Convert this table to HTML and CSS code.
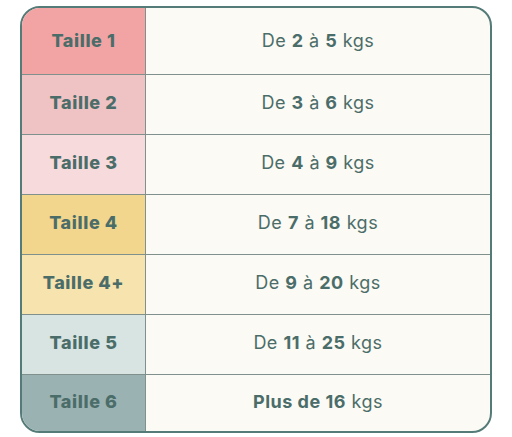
FILE: index.html
```
<!DOCTYPE html>
<html lang="fr">
<head>
<meta charset="utf-8">
<link rel="stylesheet" href="styles.css">
</head>
<body>
<div class="table">
  <div class="row r1"><div class="size">Taille 1</div><div class="weight">De <b>2</b> à <b>5</b> kgs</div></div>
  <div class="row r2"><div class="size">Taille 2</div><div class="weight">De <b>3</b> à <b>6</b> kgs</div></div>
  <div class="row r3"><div class="size">Taille 3</div><div class="weight">De <b>4</b> à <b>9</b> kgs</div></div>
  <div class="row r4"><div class="size">Taille 4</div><div class="weight">De <b>7</b> à <b>18</b> kgs</div></div>
  <div class="row r5"><div class="size">Taille 4+</div><div class="weight">De <b>9</b> à <b>20</b> kgs</div></div>
  <div class="row r6"><div class="size">Taille 5</div><div class="weight">De <b>11</b> à <b>25</b> kgs</div></div>
  <div class="row r7"><div class="size">Taille 6</div><div class="weight"><b>Plus de 16</b> kgs</div></div>
</div>
</body>
</html>
```
FILE: styles.css
```
html, body {
  margin: 0;
  padding: 0;
  background: #ffffff;
}
body {
  padding: 6px 0 0 20px;
  font-family: "Inter", "Open Sans", sans-serif;
  color: #4b6d69;
}
.table {
  box-sizing: border-box;
  width: 472px;
  border: 2px solid #557b79;
  border-radius: 20px;
  overflow: hidden;
  background: #fbfaf4;
}
.row {
  display: grid;
  grid-template-columns: 124px 1fr;
  height: 59px;
  border-bottom: 1px solid #7f908d;
}
.row.r1 { height: 66px; }
.row.r7 { height: 56px; border-bottom: none; }
.size,
.weight {
  display: flex;
  align-items: center;
  justify-content: center;
  box-sizing: border-box;
  padding-bottom: 4px;
  font-size: 18px;
}
.r1 .size,
.r1 .weight { padding-bottom: 2px; }
.size {
  font-weight: 800;
  letter-spacing: 0.6px;
  border-right: 1px solid #7f908d;
}
.weight {
  font-weight: 400;
  letter-spacing: 0.5px;
  white-space: pre;
}
.weight b { font-weight: 700; }
.r1 .size { background: #f2a4a4; }
.r2 .size { background: #efc2c3; }
.r3 .size { background: #f7dadc; }
.r4 .size { background: #f3d68e; }
.r5 .size { background: #f7e3ad; }
.r6 .size { background: #d7e4e1; }
.r7 .size { background: #9bb2b2; }
```
